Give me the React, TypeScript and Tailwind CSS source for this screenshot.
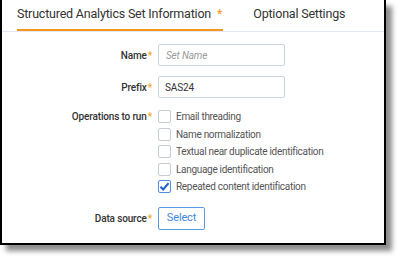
import React from "react";

const Star = () => <span className="text-[#f5a623] ml-[1px]">*</span>;

function Check({ checked, label }: { checked?: boolean; label: string }) {
  return (
    <div className="flex items-center h-[17.5px] gap-[5px]">
      <div
        className={
          "w-[13px] h-[13px] rounded-[2px] border flex items-center justify-center " +
          (checked ? "border-[#4a8fe0]" : "border-[#c5ccd6]")
        }
      >
        {checked && (
          <svg width="11" height="11" viewBox="0 0 11 11">
            <path d="M1.5 5.8 L4.2 8.5 L9.6 2.2" fill="none" stroke="#1f5fc8" strokeWidth="2" />
          </svg>
        )}
      </div>
      <span className="text-[#555] text-[10px] tracking-[-0.3px]">{label}</span>
    </div>
  );
}

export default function App() {
  return (
    <div className="w-[400px] h-[259px] bg-white" style={{ fontFamily: "Roboto, 'Liberation Sans', sans-serif" }}>
      <div className="w-[386px] h-[245px] bg-white border-l-2 border-r-2 border-b-2 border-black shadow-[6px_6px_5px_rgba(0,0,0,0.45)]">
        <div className="h-[32px] border-b border-[#e3eaf1] flex items-end pl-[15px] whitespace-nowrap">
          <div className="shrink-0 h-[31px] flex items-center border-b-2 border-[#f7941d] pr-[1px] text-[12.5px] tracking-[-0.2px] text-[#333] pb-[1px]">
            Structured Analytics Set Information <span className="text-[#f7941d] ml-[6px]">*</span>
          </div>
          <div className="shrink-0 h-[31px] flex items-center ml-[30px] text-[12.5px] tracking-[-0.2px] text-[#333] pb-[3px]">Optional Settings</div>
        </div>
        <div className="text-[10px] text-[#333] tracking-[-0.15px]">
          <div className="flex items-center mt-[12px] h-[22px]">
            <div className="w-[150px] text-right font-medium">Name<Star /></div>
            <div className="ml-[6px] w-[127px] h-[22px] border border-[#cdd5de] rounded-[2px] flex items-center px-[7px] italic text-[#999]">Set Name</div>
          </div>
          <div className="flex items-center mt-[10px] h-[22px]">
            <div className="w-[150px] text-right font-medium">Prefix<Star /></div>
            <div className="ml-[6px] w-[127px] h-[22px] border border-[#cdd5de] rounded-[2px] flex items-center px-[6px] text-[#333]">SAS24</div>
          </div>
          <div className="flex items-start mt-[10px]">
            <div className="w-[150px] text-right font-medium h-[17.5px] leading-[17.5px]">Operations to run<Star /></div>
            <div className="ml-[6px] flex flex-col">
              <Check label="Email threading" />
              <Check label="Name normalization" />
              <Check label="Textual near duplicate identification" />
              <Check label="Language identification" />
              <Check checked label="Repeated content identification" />
            </div>
          </div>
          <div className="flex items-center mt-[11px]">
            <div className="w-[150px] text-right font-medium">Data source<Star /></div>
            <div className="ml-[6px] w-[47px] h-[23px] border border-[#5a9be6] rounded-[2px] flex items-center justify-center text-[#3f86dd] text-[11px]">Select</div>
          </div>
        </div>
      </div>
    </div>
  );
}
